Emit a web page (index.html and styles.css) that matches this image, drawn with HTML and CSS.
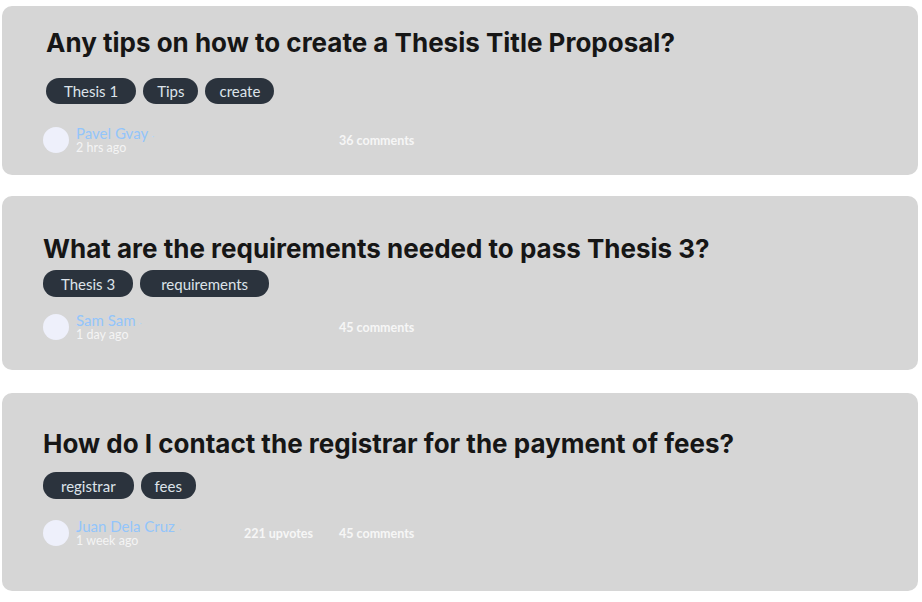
FILE: index.html
```html
<!DOCTYPE html>
<html>
<head>
<meta charset="utf-8">
<link rel="stylesheet" href="styles.css">
</head>
<body>
<div class="feed">
  <article class="card card-1">
    <h2 class="title">Any tips on how to create a Thesis Title Proposal?</h2>
    <div class="tags">
      <span class="tag">Thesis 1</span>
      <span class="tag tag-narrow">Tips</span>
      <span class="tag tag-narrow">create</span>
    </div>
    <div class="meta">
      <span class="avatar"></span>
      <div class="author">
        <span class="name">Pavel Gvay <span class="dot">·</span></span>
        <span class="time">2 hrs ago</span>
      </div>
      <span class="stat upvotes"></span>
      <span class="stat">36 comments</span>
    </div>
  </article>

  <article class="card card-2">
    <h2 class="title">What are the requirements needed to pass Thesis 3?</h2>
    <div class="tags">
      <span class="tag">Thesis 3</span>
      <span class="tag tag-wide">requirements</span>
    </div>
    <div class="meta">
      <span class="avatar"></span>
      <div class="author">
        <span class="name">Sam Sam <span class="dot">·</span></span>
        <span class="time">1 day ago</span>
      </div>
      <span class="stat upvotes"></span>
      <span class="stat">45 comments</span>
    </div>
  </article>

  <article class="card card-3">
    <h2 class="title">How do I contact the registrar for the payment of fees?</h2>
    <div class="tags">
      <span class="tag">registrar</span>
      <span class="tag tag-narrow">fees</span>
    </div>
    <div class="meta">
      <span class="avatar"></span>
      <div class="author">
        <span class="name">Juan Dela Cruz <span class="dot">·</span></span>
        <span class="time">1 week ago</span>
      </div>
      <span class="stat upvotes">221 upvotes</span>
      <span class="stat">45 comments</span>
    </div>
  </article>
</div>
</body>
</html>
```

FILE: styles.css
```css
* { box-sizing: border-box; }

body {
  margin: 0;
  background: #ffffff;
  font-family: "Lato", "Noto Sans", sans-serif;
}

.feed {
  display: flex;
  flex-direction: column;
  padding: 6px 4px 0 2px;
  gap: 21px;
}

.card {
  background: #d6d6d6;
  border-radius: 10px;
  padding-left: 41px;
}

.card-1 { height: 169px; padding-top: 21px; padding-left: 44px; }
.card-2 { height: 174px; padding-top: 37px; }
.card-3 { height: 198px; padding-top: 35px; margin-top: 2px; }

.title {
  margin: 0;
  font-family: "Inter", "Noto Sans", sans-serif;
  font-weight: 700;
  font-size: 26px;
  line-height: 32px;
  color: #161616;
  letter-spacing: 0;
}

.card-1 .title { margin-bottom: 19px; }
.card-2 .title { margin-bottom: 5px; }
.card-3 .title { margin-bottom: 12px; }

.tags {
  display: flex;
  gap: 7px;
}

.tag {
  display: inline-flex;
  align-items: center;
  height: 26px;
  padding: 0 18px;
  border-radius: 13px;
  background: #2b333d;
  color: #dde3ea;
  font-size: 15px;
}

.tag-narrow { padding: 0 14px; }
.tag-wide { padding: 0 21px; }

.card-2 .tag, .card-3 .tag { height: 27px; }

.meta {
  display: flex;
  align-items: center;
}

.card-1 .meta { margin-top: 22px; margin-left: -3px; }
.card-2 .meta { margin-top: 16px; }
.card-3 .meta { margin-top: 20px; }

.avatar {
  width: 26px;
  height: 26px;
  border-radius: 50%;
  background: #eef0fb;
  margin-right: 7px;
  flex: none;
}

.author {
  display: flex;
  flex-direction: column;
  width: 168px;
}

.name {
  font-size: 15px;
  line-height: 14px;
  color: #93c5fb;
}

.dot {
  font-size: 10px;
  color: #b7d6f5;
}

.time {
  font-size: 12.5px;
  line-height: 12px;
  color: #f4f4f4;
}

.stat {
  font-size: 12.5px;
  font-weight: 700;
  color: #f6f6f6;
}

.upvotes {
  width: 95px;
}
```
